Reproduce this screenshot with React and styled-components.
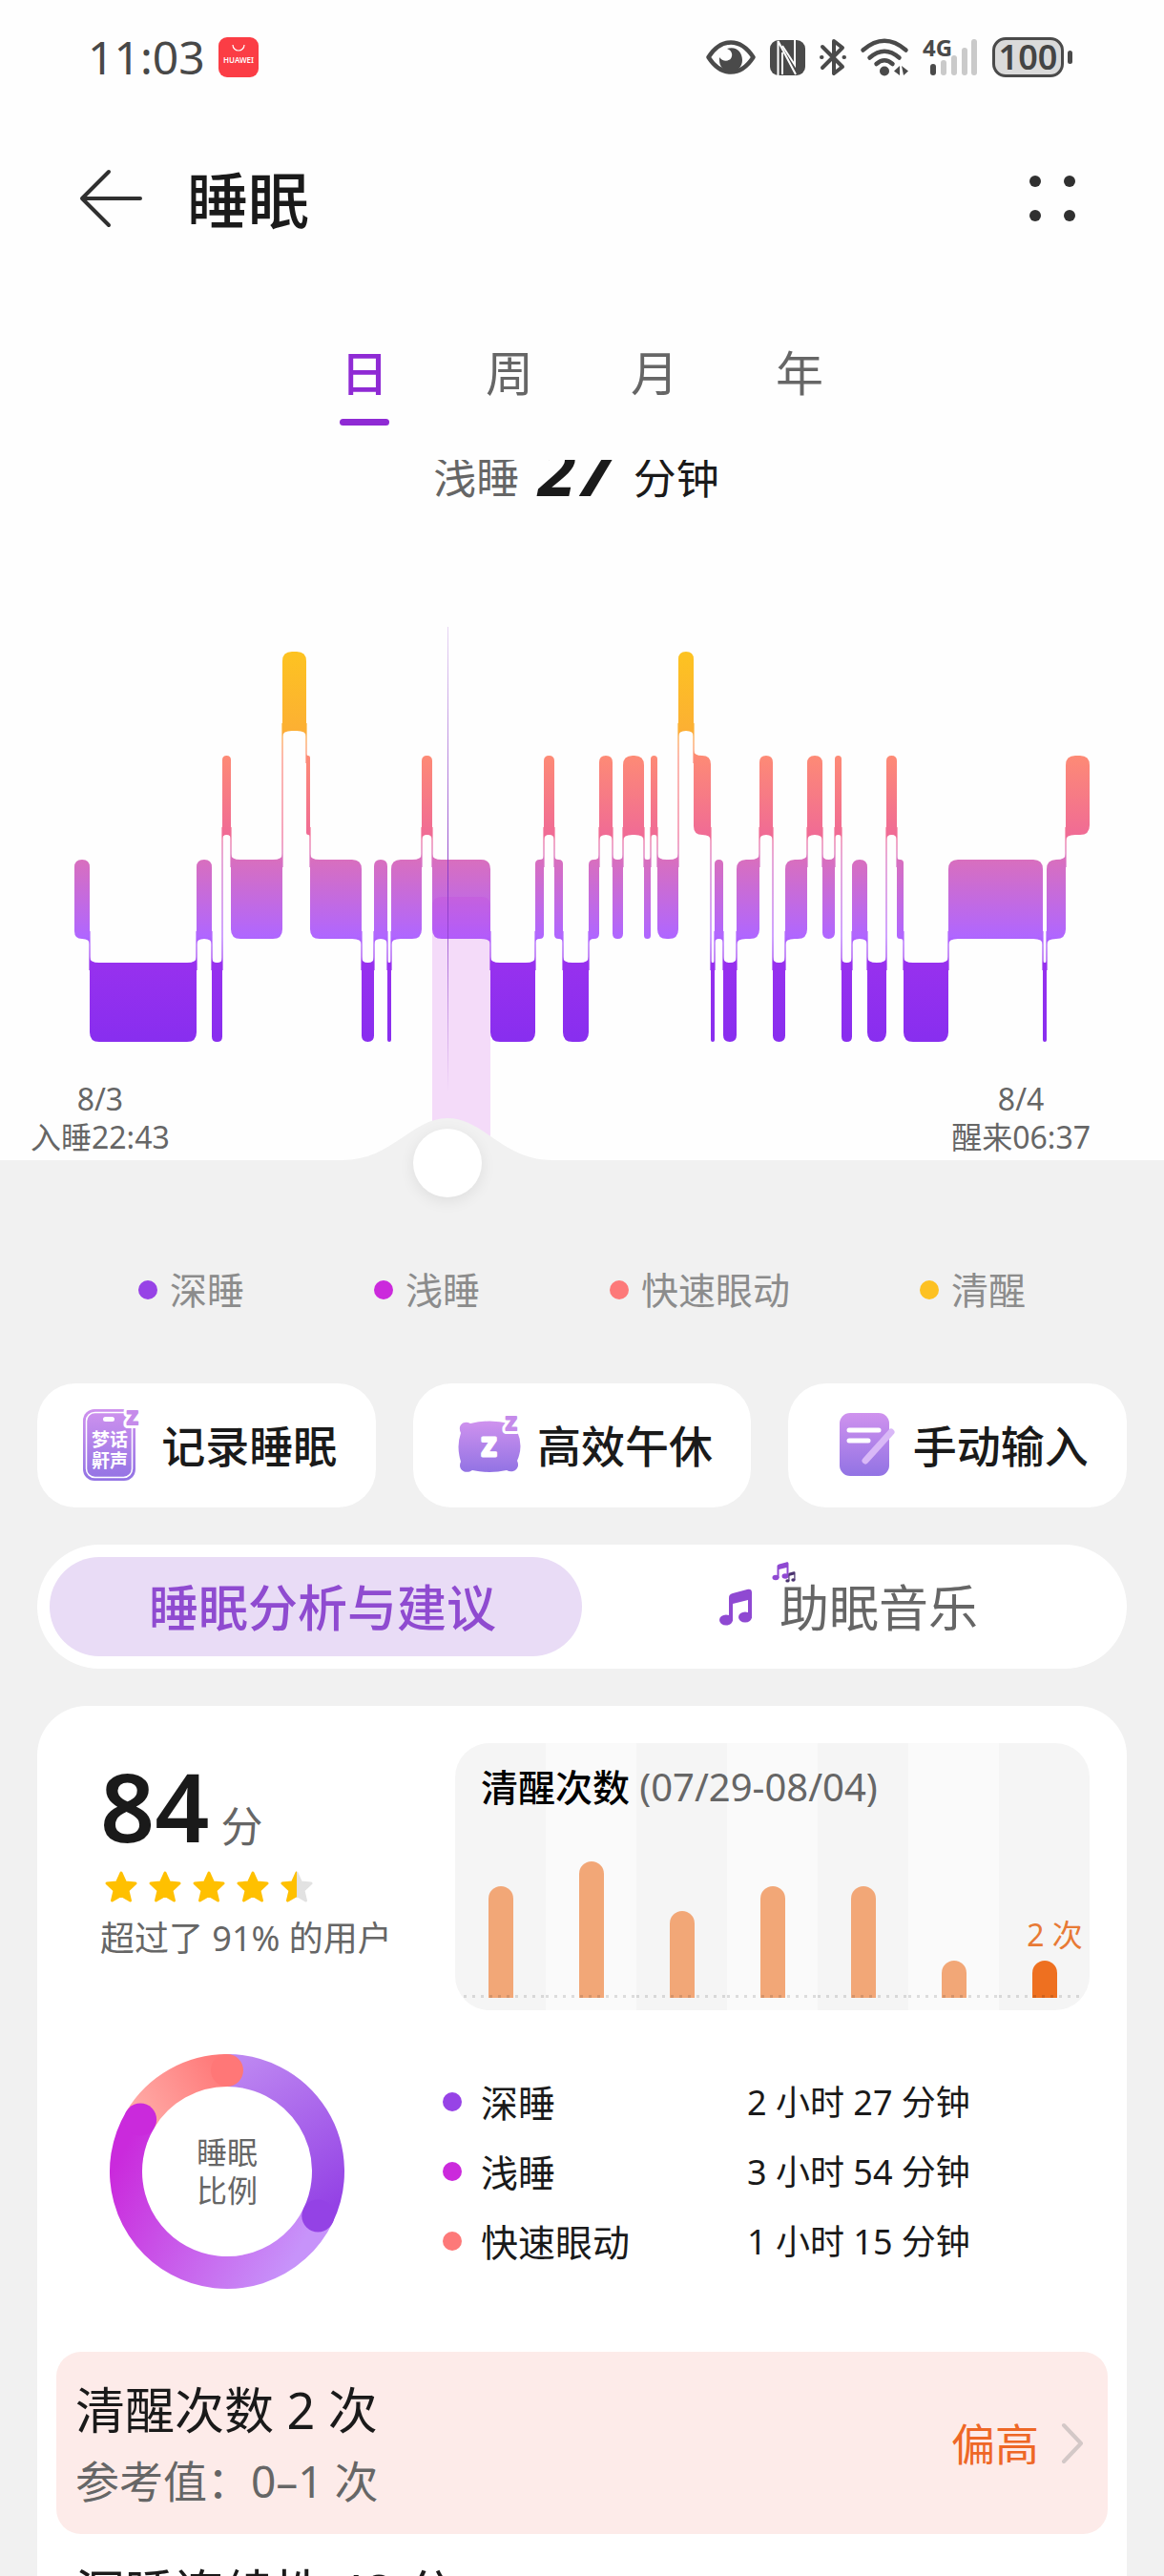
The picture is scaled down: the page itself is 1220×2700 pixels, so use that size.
import { useState } from "react";

import styled, { createGlobalStyle } from "styled-components";

const LEVELS = { wake: 683, rem: 792, light: 901, deep: 1009 };
const STAGE_HEIGHT = 83;
const CHART_LEFT = 78;
const CHART_RIGHT = 1142;
const TOTAL_MINUTES = 474;

// [stage, x where the stage ends]
const stages = [
  ["light", 94],
  ["deep", 206],
  ["light", 222],
  ["deep", 233],
  ["rem", 242],
  ["light", 296],
  ["wake", 321],
  ["rem", 325],
  ["light", 379],
  ["deep", 392],
  ["light", 406],
  ["deep", 410],
  ["light", 442],
  ["rem", 453],
  ["light", 514],
  ["deep", 561],
  ["light", 570],
  ["rem", 581],
  ["light", 590],
  ["deep", 617],
  ["light", 628],
  ["rem", 642],
  ["light", 653],
  ["rem", 675],
  ["light", 682],
  ["rem", 689],
  ["light", 711],
  ["wake", 727],
  ["rem", 745],
  ["deep", 749],
  ["light", 758],
  ["deep", 772],
  ["light", 796],
  ["rem", 810],
  ["deep", 823],
  ["light", 846],
  ["rem", 862],
  ["light", 875],
  ["rem", 882],
  ["deep", 893],
  ["light", 909],
  ["deep", 929],
  ["rem", 940],
  ["light", 947],
  ["deep", 994],
  ["light", 1093],
  ["deep", 1097],
  ["light", 1117],
  ["rem", 1142],
].map(([stage, end], i, all) => ({
  start: i === 0 ? CHART_LEFT : all[i - 1][1],
  end,
  top: LEVELS[stage],
}));

const legend = [
  { name: "深睡", color: "#9743e6" },
  { name: "浅睡", color: "#cb2adc" },
  { name: "快速眼动", color: "#fd7979" },
  { name: "清醒", color: "#fdc122" },
];

const durations = ["2 小时 27 分钟", "3 小时 54 分钟", "1 小时 15 分钟"];

const awakeBars = [117, 143, 91, 117, 117, 39, 39];

// Corners turn outwards on the side where the next stage sits above or below.
function stagePath({ start, end, top }, prev, next) {
  const bottom = top + STAGE_HEIGHT;
  const r = Math.min(10, (end - start) / 2);
  const f = Math.min(6, r);
  const upLeft = prev && prev.top < top;
  const downLeft = prev && prev.top > top;
  const upRight = next && next.top < top;
  const downRight = next && next.top > top;
  return [
    `M${start} ${upLeft ? top - f : top + r}`,
    `Q${start} ${top} ${start + r} ${top}`,
    `H${end - r}`,
    `Q${end} ${top} ${end} ${upRight ? top - f : top + r}`,
    `V${downRight ? bottom + f : bottom - r}`,
    `Q${end} ${bottom} ${end - r} ${bottom}`,
    `H${start + r}`,
    `Q${start} ${bottom} ${start} ${downLeft ? bottom + f : bottom - r}`,
    "Z",
  ].join("");
}

export default function App() {
  const [range, setRange] = useState("日");
  const [panel, setPanel] = useState("analysis");

  return (
    <Screen>
      <GlobalStyle />
      <TopArea>
        <StatusBar />
        <Header>
          <IconButton aria-label="返回">
            <svg width="68" height="62" viewBox="0 0 68 62" fill="none" stroke="#303030" strokeWidth="4" strokeLinecap="round" strokeLinejoin="round">
              <path d="M32 3L4 31L32 59M4 31H65" />
            </svg>
          </IconButton>
          <PageTitle>睡眠</PageTitle>
          <IconButton aria-label="更多">
            <svg width="50" height="50" viewBox="0 0 50 50" fill="#303030">
              <circle cx="6" cy="7" r="6" />
              <circle cx="42" cy="7" r="6" />
              <circle cx="6" cy="43" r="6" />
              <circle cx="42" cy="43" r="6" />
            </svg>
          </IconButton>
        </Header>
        <RangeTabs>
          {["日", "周", "月", "年"].map((tab) => (
            <RangeTab key={tab} $active={range === tab} onClick={() => setRange(tab)}>
              {tab}
            </RangeTab>
          ))}
        </RangeTabs>
        <Readout>
          <span>浅睡</span>
          <strong>27</strong>
          <em>分钟</em>
        </Readout>
      </TopArea>
      <SleepChart />
      <Legend>
        {legend.map(({ name, color }) => (
          <LegendItem key={name}>
            <Dot $color={color} />
            {name}
          </LegendItem>
        ))}
      </Legend>
      <Actions>
        <ActionButton>
          <PhoneIcon />
          <span>记录睡眠</span>
        </ActionButton>
        <ActionButton>
          <PillowIcon />
          <span>高效午休</span>
        </ActionButton>
        <ActionButton>
          <NoteIcon />
          <span>手动输入</span>
        </ActionButton>
      </Actions>
      <Segmented>
        <Segment $active={panel === "analysis"} onClick={() => setPanel("analysis")}>
          睡眠分析与建议
        </Segment>
        <Segment $active={panel === "music"} onClick={() => setPanel("music")}>
          <MusicIcon />
          助眠音乐
        </Segment>
      </Segmented>
      <Card>
        <Overview>
          <Score>
            <ScoreLine>
              <strong>84</strong>分
            </ScoreLine>
            <Stars />
            <p>超过了 91% 的用户</p>
          </Score>
          <AwakeCard>
            <AwakeTitle>
              清醒次数 <span>(07/29-08/04)</span>
            </AwakeTitle>
            <Columns>
              {awakeBars.map((height, i) => (
                <Column key={i}>
                  {i === awakeBars.length - 1 && <BarLabel>2 次</BarLabel>}
                  <Bar $current={i === awakeBars.length - 1} style={{ height }} />
                </Column>
              ))}
            </Columns>
          </AwakeCard>
        </Overview>
        <Proportion>
          <DonutBox>
            <Donut />
            <DonutLabel>
              睡眠
              <br />
              比例
            </DonutLabel>
          </DonutBox>
          <DurationTable>
            <tbody>
              {durations.map((duration, i) => (
                <tr key={duration}>
                  <th scope="row">
                    <Dot $color={legend[i].color} />
                    {legend[i].name}
                  </th>
                  <td>{duration}</td>
                </tr>
              ))}
            </tbody>
          </DurationTable>
        </Proportion>
        <Metric title="清醒次数 2 次" reference="参考值：0–1 次" status="偏高" warn />
        <Metric title="深睡连续性 48 分" reference="参考值：70–100 分" status="偏低" />
      </Card>
    </Screen>
  );
}

function StatusBar() {
  return (
    <Status>
      <Clock>11:03</Clock>
      <svg width="42" height="42" viewBox="0 0 42 42">
        <rect width="42" height="42" rx="9" fill="#fb3d45" />
        <path d="M15 8a6 6 0 0 0 12 0" fill="none" stroke="#fff" strokeWidth="1.2" />
        <text x="21" y="27" textAnchor="middle" fontSize="8" fontWeight="600" fill="#fff">
          HUAWEI
        </text>
      </svg>
      <StatusIcons>
        <svg width="52" height="38" viewBox="0 0 52 38">
          <path d="M2.5 19C9 9 17 3.5 26 3.5S43 9 49.5 19C43 29 35 34.5 26 34.5S9 29 2.5 19Z" fill="none" stroke="#4a4a4a" strokeWidth="4.5" strokeLinejoin="round" />
          <path d="M22 10C32 7 38 14 38 22C38 29 33 34 26 34C19 34 14 29 14 22L14 19C17 24 26 24 27 18C28 14 25 11 22 10Z" fill="#4a4a4a" />
        </svg>
        <svg width="37" height="38" viewBox="0 0 37 38">
          <rect y="1" width="37" height="37" rx="9" fill="#4a4a4a" />
          <path d="M8.500 38V2L27 37" fill="none" stroke="#fff" strokeWidth="2" />
          <path d="M13 14V37M26 1V27L13 7" fill="none" stroke="#fff" strokeWidth="2" />
        </svg>
        <svg width="28" height="40" viewBox="0 0 28 40" fill="none" stroke="#4a4a4a" strokeWidth="4" strokeLinecap="round" strokeLinejoin="round">
          <path d="M3 9L24 30L15 37V3L24 10L3 31" />
          <path d="M2 20H2.5M25.500 20H26" />
        </svg>
        <svg width="50" height="40" viewBox="0 0 50 40" fill="none" stroke="#4a4a4a" strokeWidth="4.5" strokeLinecap="round">
          <path d="M2.5 12.5Q25 -7 47.5 12.5M9.5 20.5Q25 7 40.5 20.5M16.5 27Q25 19.5 33.5 27" />
          <circle cx="25" cy="34.5" r="5" fill="#4a4a4a" stroke="none" />
          <path d="M41 29V39L35 34.5ZM43 29L50 34.5L45 39Z" fill="#4a4a4a" stroke="none" />
        </svg>
        <svg width="58" height="40" viewBox="0 0 58 40">
          <text x="0" y="19" fontSize="24" fontWeight="700" fill="#4a4a4a">
            4G
          </text>
          <rect x="8" y="27" width="6" height="12" rx="3" fill="#4a4a4a" />
          <g fill="#cacaca">
            <rect x="19" y="23" width="6" height="16" rx="3" />
            <rect x="30" y="18" width="6" height="21" rx="3" />
            <rect x="41" y="10" width="6" height="29" rx="3" />
            <rect x="51" y="1" width="6" height="38" rx="3" />
          </g>
        </svg>
        <Battery>100</Battery>
      </StatusIcons>
    </Status>
  );
}

function SleepChart() {
  const [minute, setMinute] = useState(174);
  const x = Math.round(CHART_LEFT + ((CHART_RIGHT - CHART_LEFT) * minute) / TOTAL_MINUTES);
  const current = stages.find((s) => x <= s.end) || stages[stages.length - 1];

  return (
    <ChartBox>
      <svg viewBox="0 530 1220 730">
        <defs>
          <linearGradient id="stages" gradientUnits="userSpaceOnUse" x1="0" y1="683" x2="0" y2="1092">
            <stop offset="0" stopColor="#fdc321" />
            <stop offset="0.2" stopColor="#fcb033" />
            <stop offset="0.27" stopColor="#fd8a76" />
            <stop offset="0.47" stopColor="#f06b95" />
            <stop offset="0.53" stopColor="#d96fbd" />
            <stop offset="0.73" stopColor="#b066ff" />
            <stop offset="0.8" stopColor="#9731ee" />
            <stop offset="1" stopColor="#882eef" />
          </linearGradient>
          <linearGradient id="pointer" gradientUnits="userSpaceOnUse" x1="0" y1="657" x2="0" y2="1145">
            <stop offset="0" stopColor="#8a3bc8" stopOpacity="0.2" />
            <stop offset="0.55" stopColor="#8a3bc8" />
            <stop offset="1" stopColor="#8a3bc8" stopOpacity="0" />
          </linearGradient>
        </defs>
        <g fill="url(#stages)">
          {stages.map((s, i) => (
            <path key={i} d={stagePath(s, stages[i - 1], stages[i + 1])} />
          ))}
          {stages.slice(1).map((s, i) => {
            const top = Math.min(s.top, stages[i].top) + STAGE_HEIGHT - 8;
            const bottom = Math.max(s.top, stages[i].top) + 8;
            return <rect key={i} x={s.start - 1} y={top} width="2" height={bottom - top} opacity="0.6" />;
          })}
        </g>
        <path
          d={`M${current.start} 1216V950Q${current.start} 940 ${current.start + 10} 940H${current.end - 10}Q${current.end} 940 ${current.end} 950V1216Z`}
          fill="#c42de0"
          opacity="0.17"
        />
        <rect x={x} y="657" width="1" height="488" fill="url(#pointer)" />
        <path
          d={`M0 1216H${x - 110}C${x - 58} 1216 ${x - 38} 1172 ${x} 1172S${x + 58} 1216 ${x + 110} 1216H1220V1260H0Z`}
          fill="#f1f1f1"
        />
      </svg>
      <TimeLabels>
        <p>
          8/3
          <br />
          入睡22:43
        </p>
        <p>
          8/4
          <br />
          醒来06:37
        </p>
      </TimeLabels>
      <Scrubber
        type="range"
        aria-label="睡眠时间"
        min="0"
        max={TOTAL_MINUTES}
        value={minute}
        onChange={(e) => setMinute(Number(e.target.value))}
      />
    </ChartBox>
  );
}

function Purple({ id }) {
  return (
    <defs>
      <linearGradient id={id} x1="0" y1="0" x2="0" y2="1">
        <stop offset="0" stopColor="#cf92ee" />
        <stop offset="1" stopColor="#9273e4" />
      </linearGradient>
    </defs>
  );
}

function PhoneIcon() {
  return (
    <svg width="80" height="80" viewBox="0 0 80 80">
      <Purple id="phone" />
      <rect x="8" y="2" width="55" height="75" rx="12" fill="url(#phone)" />
      <rect x="11.5" y="5.5" width="48" height="68" rx="9" fill="none" stroke="#fff" strokeWidth="1.5" />
      <rect x="29" y="10" width="12" height="5" rx="2.5" fill="#fff" />
      <g fontSize="19" fontWeight="700" fill="#fff" textAnchor="middle">
        <text x="36" y="41">
          梦话
        </text>
        <text x="36" y="63">
          鼾声
        </text>
      </g>
      <text x="54" y="18" fontSize="20" fontWeight="700" fill="#c58bea" stroke="#fff" strokeWidth="8" strokeLinejoin="round" paintOrder="stroke">
        Z
      </text>
      <text x="54" y="18" fontSize="20" fontWeight="700" fill="#c58bea" stroke="#c58bea" strokeWidth="2" strokeLinejoin="round">
        Z
      </text>
    </svg>
  );
}

function PillowIcon() {
  return (
    <svg width="80" height="80" viewBox="0 0 80 80">
      <Purple id="pillow" />
      <path
        d="M20 17Q40 12 61 17C66 14 72 19 69 25Q76 41 69 56C73 64 65 70 58 66Q40 70 22 66C15 71 6 65 10 57Q5 41 10 27C6 19 13 13 20 17Z"
        fill="url(#pillow)"
      />
      <text x="32" y="51" fontSize="26" fontWeight="700" fill="#fff" stroke="#fff" strokeWidth="3" strokeLinejoin="round">
        Z
      </text>
      <text x="57" y="24" fontSize="20" fontWeight="700" fill="#c58bea" stroke="#fff" strokeWidth="8" strokeLinejoin="round" paintOrder="stroke">
        Z
      </text>
      <text x="57" y="24" fontSize="20" fontWeight="700" fill="#c58bea" stroke="#c58bea" strokeWidth="2" strokeLinejoin="round">
        Z
      </text>
    </svg>
  );
}

function NoteIcon() {
  return (
    <svg width="80" height="80" viewBox="0 0 80 80">
      <Purple id="note" />
      <rect x="13" y="6" width="52" height="66" rx="11" fill="url(#note)" />
      <path d="M23 24H54M23 35H43" stroke="#fff" strokeWidth="5" strokeLinecap="round" />
      <path d="M67 26L40 56" stroke="#d9b8f7" strokeWidth="7" strokeLinecap="round" />
    </svg>
  );
}

function MusicIcon() {
  return (
    <svg width="84" height="72" viewBox="0 0 84 72">
      <g id="melody">
        <path d="M11 40C11 37 12 36 15 35L30 31C33 30 35 31 35 34V61H31V42L15 46V64H11Z" />
        <ellipse cx="8" cy="63" rx="7" ry="5.5" />
        <ellipse cx="28" cy="60" rx="7" ry="5.5" />
      </g>
      <use href="#melody" transform="translate(56 -13) scale(0.5)" />
      <use href="#melody" transform="translate(70 3) scale(0.3)" fill="#4b3470" />
    </svg>
  );
}

function Stars() {
  const star = "M18 3L22.5 13L33 14L25 21.5L27.5 32L18 26.5L8.5 32L11 21.5L3 14L13.5 13Z";
  return (
    <StarRow role="img" aria-label="4.5 / 5">
      {[0, 1, 2, 3, 4].map((i) => (
        <svg key={i} width="36" height="36" viewBox="0 0 36 36" strokeWidth="3" strokeLinejoin="round">
          <clipPath id={`star${i}`}>
            <rect width={i === 4 ? 18 : 36} height="36" />
          </clipPath>
          {i === 4 && <path d={star} fill="#e2e2e2" stroke="#e2e2e2" />}
          <path d={star} fill="#ffc000" stroke="#ffc000" clipPath={`url(#star${i})`} />
        </svg>
      ))}
    </StarRow>
  );
}

function point(deg) {
  const rad = (deg * Math.PI) / 180;
  return [123 + 106 * Math.sin(rad), 123 - 106 * Math.cos(rad)];
}

function Donut() {
  const arcs = [
    { from: 0, to: 116, start: "#bd86f1", end: "#9442e5" },
    { from: 116, to: 301, start: "#c793fa", end: "#ca2adc" },
    { from: 301, to: 360, start: "#ffaaa6", end: "#ff7777" },
  ];
  return (
    <svg width="246" height="246" viewBox="0 0 246 246" fill="none">
      {arcs.map(({ from, to, start, end }) => {
        const [x1, y1] = point(from);
        const [x2, y2] = point(to);
        return (
          <g key={from}>
            <linearGradient id={`arc${from}`} gradientUnits="userSpaceOnUse" x1={x1} y1={y1} x2={x2} y2={y2}>
              <stop offset="0" stopColor={start} />
              <stop offset="1" stopColor={end} />
            </linearGradient>
            <path d={`M${x1} ${y1}A106 106 0 ${to - from > 180 ? 1 : 0} 1 ${x2} ${y2}`} stroke={`url(#arc${from})`} strokeWidth="34" />
          </g>
        );
      })}
      {arcs.map(({ to, end }) => {
        const [cx, cy] = point(to);
        return <circle key={to} cx={cx} cy={cy} r="17" fill={end} />;
      })}
    </svg>
  );
}

function Metric({ title, reference, status, warn }) {
  return (
    <MetricRow $warn={warn}>
      <div>
        <MetricTitle>{title}</MetricTitle>
        <MetricReference>{reference}</MetricReference>
      </div>
      <MetricStatus>{status}</MetricStatus>
      <svg width="26" height="46" viewBox="0 0 26 46" fill="none" stroke="#d3c8c7" strokeWidth="4" strokeLinecap="round" strokeLinejoin="round">
        <path d="M4 4L22 23L4 42" />
      </svg>
    </MetricRow>
  );
}

const GlobalStyle = createGlobalStyle`
  * {
    box-sizing: border-box;
    margin: 0;
    padding: 0;
  }

  body {
    font-family: "Noto Sans", "Noto Sans CJK SC", sans-serif;
    color: #1a1a1a;
  }

  button {
    font: inherit;
    color: inherit;
    border: none;
    background: none;
    cursor: pointer;
  }

  svg {
    display: block;
    flex-shrink: 0;
    overflow: visible;
  }
`;

const Screen = styled.main`
  height: 100vh;
  overflow-x: hidden;
  overflow-y: auto;
  scrollbar-width: none;
  background-color: #f1f1f1;
`;

const TopArea = styled.div`
  background-color: #fefefe;
`;

const Status = styled.div`
  height: 119px;
  padding: 0 97px 0 92px;

  display: flex;
  align-items: center;
`;

const Clock = styled.p`
  margin-right: 14px;
  font-size: 48px;
  color: #484848;
`;

const StatusIcons = styled.div`
  margin-left: auto;

  display: flex;
  align-items: center;
  gap: 15px;
`;

const Battery = styled.div`
  position: relative;
  width: 75px;
  height: 42px;
  margin-right: 8px;

  border: 3px solid #4a4a4a;
  border-radius: 14px;
  background-color: #dadada;

  font-size: 36px;
  font-weight: 600;
  line-height: 36px;
  text-align: center;
  color: #444444;

  &::after {
    content: "";
    position: absolute;
    top: 11px;
    right: -12px;
    width: 5px;
    height: 14px;
    border-radius: 3px;
    background-color: #4a4a4a;
  }
`;

const Header = styled.header`
  height: 178px;
  padding: 0 91px 0 82px;

  display: flex;
  align-items: center;
  gap: 46px;
`;

const IconButton = styled.button`
  display: flex;
`;

const PageTitle = styled.h1`
  flex: 1;
  padding-bottom: 4px;
  font-size: 64px;
  font-weight: 500;
`;

const RangeTabs = styled.nav`
  padding-top: 58px;

  display: flex;
  justify-content: center;
  gap: 100px;
`;

const RangeTab = styled.button`
  width: 52px;

  && {
    font-size: 50px;
    font-weight: ${(props) => (props.$active ? "500" : "400")};
    line-height: 72px;
    color: ${(props) => (props.$active ? "#8f2ad4" : "#666666")};
  }

  &::after {
    content: "";
    display: block;
    height: 7px;
    margin-top: 12px;
    border-radius: 4px;
    background-color: ${(props) => (props.$active ? "#8f2ad4" : "transparent")};
  }
`;

const Readout = styled.p`
  height: 48px;
  margin-top: 36px;
  padding-right: 12px;
  overflow: hidden;

  display: flex;
  align-items: flex-end;
  justify-content: center;

  font-size: 45px;
  line-height: 58px;

  > span {
    color: #666666;
  }

  > strong {
    margin: 0 20px;
    font-size: 72px;
    font-style: italic;
    line-height: 76px;
  }

  > em {
    font-style: normal;
  }
`;

const ChartBox = styled.section`
  display: grid;
  background-color: #fefefe;

  > * {
    grid-area: 1 / 1;
  }

  > svg {
    width: 100%;
  }
`;

const TimeLabels = styled.div`
  align-self: end;
  padding: 0 77px 48px 32px;

  display: flex;
  justify-content: space-between;

  font-size: 32px;
  line-height: 40px;
  text-align: center;
  color: #666666;
`;

const Scrubber = styled.input`
  align-self: end;
  height: 72px;
  margin: 0 42px 5px;

  appearance: none;
  background: none;

  &::-webkit-slider-thumb {
    appearance: none;
    width: 72px;
    height: 72px;
    border-radius: 50%;
    background-color: white;
    box-shadow: 0 4px 16px rgba(0, 0, 0, 0.08);
  }
`;

const Legend = styled.ul`
  padding: 64px 145px 69px;

  display: flex;
  justify-content: space-between;
  list-style: none;
`;

const LegendItem = styled.li`
  display: flex;
  align-items: center;

  font-size: 39px;
  line-height: 56px;
  color: #8c8c8c;
`;

const Dot = styled.span`
  width: 20px;
  height: 20px;
  margin-right: 13px;
  border-radius: 50%;
  background-color: ${(props) => props.$color};
`;

const Actions = styled.div`
  padding: 1px 39px 0;

  display: grid;
  grid-template-columns: repeat(3, 1fr);
  gap: 39px;
`;

const ActionButton = styled.button`
  height: 130px;
  border-radius: 40px;
  background-color: white;

  display: flex;
  align-items: center;
  justify-content: center;
  gap: 10px;

  && {
    font-size: 46px;
    font-weight: 500;
  }

  > span {
    padding-bottom: 4px;
  }
`;

const Segmented = styled.div`
  height: 130px;
  margin: 39px;
  padding: 13px;
  border-radius: 65px;
  background-color: white;

  display: grid;
  grid-template-columns: repeat(2, 1fr);
`;

const Segment = styled.button`
  border-radius: 52px;
  background-color: ${(props) => (props.$active ? "#e9dcf6" : "transparent")};

  display: flex;
  align-items: center;
  justify-content: center;

  && {
    padding: 0 0 4px 14px;
    font-size: 52px;
    font-weight: ${(props) => (props.$active ? "500" : "400")};
    color: ${(props) => (props.$active ? "#8f4bd0" : "#666666")};
  }

  > svg {
    margin: -22px -20px 0 -14px;
    fill: #8f49d2;
  }
`;

const Card = styled.section`
  margin: 0 39px;
  border-radius: 52px 52px 0 0;
  background-color: white;
`;

const Overview = styled.div`
  padding: 39px 39px 0;

  display: grid;
  grid-template-columns: 3fr 5fr;
`;

const Score = styled.div`
  padding: 9px 0 0 27px;

  > p:last-child {
    margin-top: 12px;
    font-size: 36px;
    line-height: 48px;
    color: #666666;
  }
`;

const ScoreLine = styled.p`
  height: 112px;

  display: flex;
  align-items: baseline;
  gap: 12px;

  font-size: 44px;
  line-height: 112px;
  color: #666666;

  > strong {
    font-size: 100px;
    font-weight: 600;
    color: #1a1a1a;
  }
`;

const StarRow = styled.div`
  margin: 12px 0 0 4px;

  display: flex;
  gap: 10px;
`;

const AwakeCard = styled.div`
  height: 280px;
  border-radius: 36px;
  overflow: hidden;

  display: grid;

  > * {
    grid-area: 1 / 1;
  }
`;

const AwakeTitle = styled.h2`
  z-index: 1;
  padding: 18px 27px;

  font-size: 39px;
  font-weight: 500;
  line-height: 56px;
  color: black;

  > span {
    font-size: 40px;
    font-weight: 400;
    color: #666666;
  }
`;

const Columns = styled.div`
  display: grid;
  grid-template-columns: repeat(7, 1fr);
`;

const Column = styled.div`
  padding-bottom: 13px;
  background-color: #f5f5f5;

  display: flex;
  flex-direction: column;
  align-items: center;
  justify-content: flex-end;

  &:nth-child(even) {
    background-color: #fafafa;
  }

  &::after {
    content: "";
    align-self: stretch;
    height: 3px;
    margin-top: -3px;
    background: repeating-linear-gradient(90deg, rgba(0, 0, 0, 0.12) 0 3px, transparent 3px 9px);
  }
`;

const Bar = styled.div`
  width: 26px;
  border-radius: 13px 13px 0 0;
  background-color: ${(props) => (props.$current ? "#ee7020" : "#f2a777")};
`;

const BarLabel = styled.p`
  margin: 0 -10px 4px 12px;
  font-size: 32px;
  line-height: 46px;
  white-space: nowrap;
  color: #e87a35;
`;

const Proportion = styled.div`
  padding: 46px 39px 66px 76px;

  display: flex;
  align-items: center;
  gap: 103px;
`;

const DonutBox = styled.div`
  display: grid;
  place-items: center;

  > * {
    grid-area: 1 / 1;
  }
`;

const DonutLabel = styled.p`
  font-size: 32px;
  line-height: 40px;
  color: #666666;
`;

const DurationTable = styled.table`
  border-collapse: collapse;
  line-height: 73px;
  text-align: left;

  th {
    width: 319px;

    display: flex;
    align-items: center;

    font-size: 39px;
    font-weight: 400;
  }

  th > span {
    margin-right: 20px;
  }

  td {
    font-size: 36px;
  }
`;

const MetricRow = styled.div`
  margin: 0 20px;
  padding: 18px 24px 18px 20px;
  border-radius: 26px;
  background-color: ${(props) => (props.$warn ? "#fdebe9" : "transparent")};

  display: flex;
  align-items: center;

  > div {
    padding-top: 7px;
  }
`;

const MetricTitle = styled.h3`
  font-size: 52px;
  font-weight: 400;
  line-height: 72px;
`;

const MetricReference = styled.p`
  font-size: 46px;
  line-height: 76px;
  color: #666666;
`;

const MetricStatus = styled.p`
  margin: 0 22px 0 auto;
  padding-bottom: 4px;
  font-size: 46px;
  color: #ee6726;
`;
